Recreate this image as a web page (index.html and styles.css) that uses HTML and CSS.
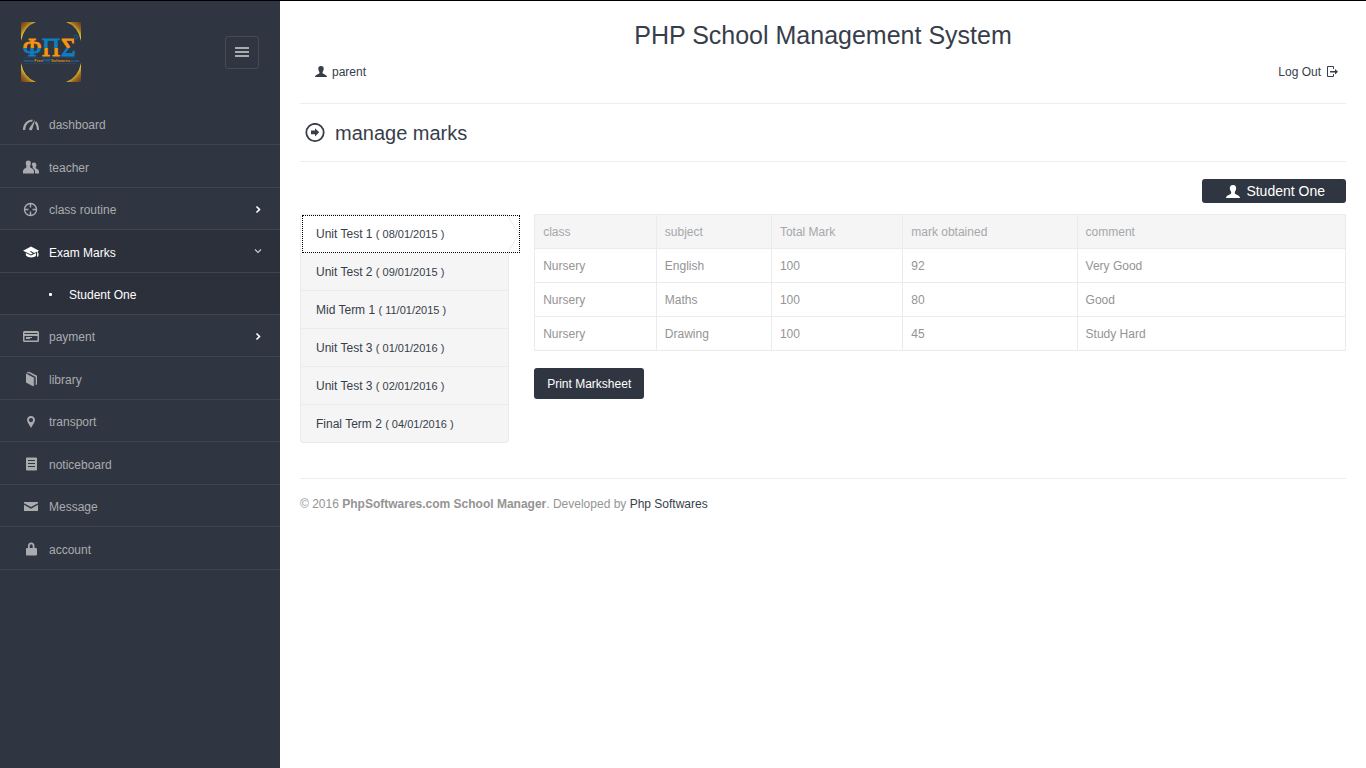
FILE: index.html
```html
<!DOCTYPE html>
<html lang="en">
<head>
<meta charset="utf-8">
<title>manage marks</title>
<link rel="stylesheet" href="styles.css">
</head>
<body>
<div class="page">
  <aside class="sidebar">
    <header class="brand">
      <a href="#" class="logo" aria-label="Home">
        <svg width="60" height="60" viewBox="0 0 60 60">
          <defs>
            <linearGradient id="warm" x1="0" y1="0" x2="0" y2="1"><stop offset=".52" stop-color="#fb9210"/><stop offset=".52" stop-color="#0d7dc4"/></linearGradient>
            <linearGradient id="cool" x1="0" y1="0" x2="0" y2="1"><stop offset=".52" stop-color="#0d7dc4"/><stop offset=".52" stop-color="#fb9210"/></linearGradient>
            <radialGradient id="gold" gradientUnits="userSpaceOnUse" cx="30" cy="30" r="42"><stop offset=".78" stop-color="#e6c62c"/><stop offset=".87" stop-color="#9c6c22"/><stop offset="1" stop-color="#70351c"/></radialGradient>
          </defs>
          <path fill="url(#gold)" d="M0 0h15Q3 4 0 19zM60 0H45Q57 4 60 19zM0 60h15Q3 56 0 41zM60 60H45Q57 56 60 41z"/>
          <g class="logo-letters">
            <text x="2" y="34" fill="url(#warm)" stroke="url(#warm)">Φ</text>
            <text x="21" y="34" fill="url(#cool)" stroke="url(#cool)">Π</text>
            <text x="40" y="34" fill="url(#warm)" stroke="url(#warm)">Σ</text>
          </g>
          <circle cx="55" cy="15" r="2" fill="none" stroke="#1a5988"/>
          <path d="M3 35.500h52M3 41.500h52" stroke="#27435c"/>
          <text class="logo-url" x="3" y="40" fill="#176da9">www.<tspan fill="#df861c">Free</tspan>PHP<tspan fill="#df861c">Softwares</tspan>.com</text>
        </svg>
      </a>
      <button class="toggle" type="button" aria-label="Toggle menu">
        <svg width="14" height="10" viewBox="0 0 14 10"><path d="M0 1h14M0 5h14M0 9h14" stroke="currentColor" stroke-width="2"/></svg>
      </button>
    </header>
    <nav>
      <ul class="menu">
        <li><a href="#"><svg class="ico" viewBox="0 0 16 16"><path d="M1 13C1 7 5 3.500 9.500 3.500" fill="none" stroke="currentColor" stroke-width="2.200"/><path d="M12.500 5Q15 8 15 13" fill="none" stroke="currentColor" stroke-width="2"/><path d="M12.200 2.500L9.200 12.500Q8 14 6.400 12.900Q5.700 12 6.400 11z" fill="currentColor"/></svg><span>dashboard</span></a></li>
        <li><a href="#"><svg class="ico" viewBox="0 0 16 16"><path fill="currentColor" d="M5.300 1.500c1.800 0 2.600 1.100 2.500 2.900 0 1.800-.8 2.200-.8 3.400 0 1.500 4 1.500 4 4.700v2H0v-2c0-3 3.500-3 3.500-4.700C3.500 6.600 2.800 6 2.800 4.400c-.1-1.800.7-2.900 2.500-2.900zM11 3.500c1.500 0 2.400.9 2.400 2.400 0 1.400-.7 1.700-.7 2.700 0 1.500 3.300 1.500 3.300 4v1.900h-4v-2c0-2.100-1.300-2.900-2.500-3.500.8-1 .1-1.700-.7-3.400.1-1.400.8-2.100 2.200-2.100z"/></svg><span>teacher</span></a></li>
        <li><a href="#"><svg class="ico" viewBox="0 0 16 16"><g fill="none" stroke="currentColor" stroke-width="1.400"><circle cx="7.500" cy="7.500" r="6"/><path d="M7.500 2v3.500M7.500 9.500V13M2 7.500h3.500M9.500 7.500H13"/></g></svg><span>class routine</span><svg class="arrow" viewBox="0 0 10 10"><path d="M3.500 1.500L6.500 4.500l-3 3" fill="none" stroke="currentColor" stroke-width="1.600"/></svg></a></li>
        <li class="open"><a href="#"><svg class="ico" viewBox="0 0 16 16"><path fill="currentColor" d="M8 2.500l8 4.200-1.100.6v1.200c1 .8.800 3.700-.2 4.500-.8-.7-.8-2.700-.5-4.200V7.700L11 9l-3-2-1 .5 2.700 2L8 10.500 0 6.700zM2.700 9L8 11.500 13 9v2.800C11 14 5 14 3 11.500z"/></svg><span>Exam Marks</span><svg class="arrow down" viewBox="0 0 10 10"><path d="M2 2.500l3 3 3-3" fill="none" stroke="currentColor" stroke-width="1.200"/></svg></a>
          <ul class="submenu"><li><a href="#"><i class="dot"></i><span>Student One</span></a></li></ul>
        </li>
        <li><a href="#"><svg class="ico" viewBox="0 0 16 16"><path fill="currentColor" fill-rule="evenodd" d="M1.500 2h13Q16 2 16 3.500v8q0 1.500-1.500 1.500h-13Q0 13 0 11.500v-8Q0 2 1.500 2zM1.500 4v1h13V4zM1.500 7v4.500h13V7zM3 8h6v1H3zM3 9h4v1H3z"/></svg><span>payment</span><svg class="arrow" viewBox="0 0 10 10"><path d="M3.500 1.500L6.500 4.500l-3 3" fill="none" stroke="currentColor" stroke-width="1.600"/></svg></a></li>
        <li><a href="#"><svg class="ico" viewBox="0 0 16 16"><path fill="currentColor" d="M3 2.500l7.500 4V15.500l-7.500-4zM3.500 1.700L6 .8l8 4V13.500l-1.300.5V6L5.500 2l-.8.4zM11.200 6.200v8.300l-.5.300V6z"/></svg><span>library</span></a></li>
        <li><a href="#"><svg class="ico" viewBox="0 0 16 16"><path fill="currentColor" fill-rule="evenodd" d="M8 2c2.500 0 4 1.700 4 4 0 2.500-2.500 4.500-4 8-1.500-3.500-4-5.500-4-8 0-2.300 1.500-4 4-4zm0 2a2 2 0 100 4.200A2 2 0 008 4z"/></svg><span>transport</span></a></li>
        <li><a href="#"><svg class="ico" viewBox="0 0 16 16"><path fill="currentColor" fill-rule="evenodd" d="M4 1.500h9q1 0 1 1v11q0 1-1 1H4q-1 0-1-1v-11q0-1 1-1zM5 4v1h7V4zM5 7v1h7V7zM5 10v1h7v-1z"/></svg><span>noticeboard</span></a></li>
        <li><a href="#"><svg class="ico" viewBox="0 0 16 16"><path fill="currentColor" d="M1 3h14v1.300L8 8.100 1 4.300zM1 5.800l7 3.900 7-3.900V12H1z"/></svg><span>Message</span></a></li>
        <li><a href="#"><svg class="ico" viewBox="0 0 16 16"><path fill="currentColor" fill-rule="evenodd" d="M5 7V5q0-3.500 3.200-3.500T11.500 5v2H13q1 0 1 1v5.500q0 1-1 1H4q-1 0-1-1V8q0-1 1-1zm1.700 0h3V5q0-1.800-1.500-1.800T6.700 5z"/></svg><span>account</span></a></li>
      </ul>
    </nav>
  </aside>

  <main class="content">
    <h2 class="site-title">PHP School Management System</h2>
    <div class="userbar">
      <a href="#"><svg class="mini" viewBox="0 0 12 12"><path fill="currentColor" d="M6 0c2 0 2.900 1.200 2.700 3.200C8.500 5 7.500 5.400 7.500 6.700 7.500 8.300 12 8.300 12 11H0c0-2.700 4.500-2.700 4.500-4.300 0-1.300-1-1.700-1.200-3.500C3.100 1.200 4 0 6 0z"/></svg><span>parent</span></a>
      <a href="#"><span>Log Out</span><svg class="mini" viewBox="0 0 12 12"><path d="M7.500 3V.500h-6v10h6V8" fill="none" stroke="currentColor"/><path fill="currentColor" d="M4 5h5V3l3 2.700L9 8.500V6.500H4z"/></svg></a>
    </div>
    <h3 class="page-title"><svg width="20" height="20" viewBox="0 0 20 20"><circle cx="10" cy="9.500" r="8.700" fill="none" stroke="currentColor" stroke-width="1.800"/><path fill="currentColor" d="M6 7.500h4V5.200l4.200 4.100L10 13.500v-2.300H6z"/></svg>manage marks</h3>
    <div class="student-row">
      <button type="button" class="student"><svg width="14" height="13" viewBox="0 0 12 11"><path fill="currentColor" d="M6 0c2 0 2.900 1.200 2.700 3.200C8.500 5 7.500 5.400 7.500 6.700 7.500 8.300 12 8.300 12 11H0c0-2.700 4.500-2.700 4.500-4.300 0-1.300-1-1.700-1.200-3.500C3.100 1.200 4 0 6 0z"/></svg>Student One</button>
    </div>
    <div class="marks">
      <ul class="tabs">
        <li class="active"><a href="#">Unit Test 1 <small>( 08/01/2015 )</small><svg class="point" width="13" height="38" viewBox="0 0 13 38"><path d="M0 0l12 19L0 38" fill="#fff" stroke="#ebebeb"/></svg></a></li>
        <li><a href="#">Unit Test 2 <small>( 09/01/2015 )</small></a></li>
        <li><a href="#">Mid Term 1 <small>( 11/01/2015 )</small></a></li>
        <li><a href="#">Unit Test 3 <small>( 01/01/2016 )</small></a></li>
        <li><a href="#">Unit Test 3 <small>( 02/01/2016 )</small></a></li>
        <li><a href="#">Final Term 2 <small>( 04/01/2016 )</small></a></li>
      </ul>
      <section class="results">
        <table>
          <colgroup><col class="c-class"><col class="c-subject"><col class="c-total"><col class="c-mark"><col></colgroup>
          <thead><tr><th>class</th><th>subject</th><th>Total Mark</th><th>mark obtained</th><th>comment</th></tr></thead>
          <tbody>
            <tr><td>Nursery</td><td>English</td><td>100</td><td>92</td><td>Very Good</td></tr>
            <tr><td>Nursery</td><td>Maths</td><td>100</td><td>80</td><td>Good</td></tr>
            <tr><td>Nursery</td><td>Drawing</td><td>100</td><td>45</td><td>Study Hard</td></tr>
          </tbody>
        </table>
        <button type="button" class="print">Print Marksheet</button>
      </section>
    </div>
    <footer class="footer">© 2016 <strong>PhpSoftwares.com School Manager</strong>. Developed by <a href="#">Php Softwares</a></footer>
  </main>
</div>
</body>
</html>
```
FILE: styles.css
```css
* { box-sizing: border-box; }

body {
  margin: 0;
  border-top: 1px solid #000;
  background: #fff;
  color: #949494;
  font: 12px/17px "Liberation Sans", Arial, sans-serif;
}

ul { list-style: none; margin: 0; padding: 0; }
a { color: #373e4a; text-decoration: none; }
button { font: inherit; cursor: pointer; }
svg { display: block; flex: none; }

.page {
  display: flex;
  min-height: calc(100vh - 1px);
}

/* Sidebar */
.sidebar {
  flex: none;
  width: 280px;
  background: #303641;
}

.brand {
  display: flex;
  justify-content: space-between;
  align-items: center;
  padding: 21px;
}

.logo-letters { font: 25px "Liberation Serif", serif; }
.logo-url { font: bold 4px "Liberation Sans", sans-serif; }

.toggle {
  display: flex;
  align-items: center;
  justify-content: center;
  width: 34px;
  height: 33px;
  padding: 0;
  border: 1px solid #454a54;
  border-radius: 3px;
  background: none;
  color: #aaabae;
}

.menu a {
  display: flex;
  align-items: center;
  gap: 10px;
  min-height: 42px;
  padding: 2px 17px 0 23px;
  border-bottom: 1px solid #3f444f;
  color: #aaabae;
}

.menu span,
.userbar span { padding-top: 2px; }

.menu > li:nth-child(even) > a { min-height: 43px; }
.menu .open a { background: #2c303b; color: #fff; }
.menu .submenu a { gap: 17px; padding-left: 49px; }

.ico { width: 16px; height: 16px; }
.arrow { width: 10px; height: 10px; margin-left: auto; color: #fff; }
.arrow.down { color: #c8c9cc; }

.dot {
  width: 3px;
  height: 3px;
  border-radius: 1px;
  background: #fff;
}

/* Content */
.content {
  flex: 1;
  min-width: 0;
  padding: 20px;
}

.site-title,
.page-title {
  margin: 0;
  color: #373e4a;
  font-weight: normal;
}

.site-title {
  font-size: 25px;
  line-height: 28px;
  text-align: center;
}

.userbar {
  display: flex;
  justify-content: space-between;
  padding: 13px 8px 22px 15px;
  border-bottom: 1px solid #eee;
}

.userbar a { display: flex; align-items: center; gap: 5px; }
.mini { width: 12px; height: 12px; }

.page-title {
  display: flex;
  align-items: center;
  gap: 10px;
  padding: 17px 5px 16px;
  border-bottom: 1px solid #eee;
  font-size: 20px;
  line-height: 24px;
}

.student-row {
  display: flex;
  justify-content: flex-end;
  padding: 17px 0 11px;
}

.student {
  display: flex;
  align-items: center;
  gap: 6px;
  height: 24px;
  padding: 0 21px 0 24px;
  border: 0;
  border-radius: 3px;
  background: #303641;
  color: #fff;
  font-size: 14px;
}

.marks {
  display: flex;
  align-items: flex-start;
  gap: 25px;
  padding-bottom: 35px;
  border-bottom: 1px solid #eee;
}

.tabs {
  flex: none;
  width: 20%;
  border: 1px solid #ebebeb;
  border-radius: 3px;
  background: #f5f5f5;
}

.tabs a { display: block; padding: 11px 15px 9px; }
.tabs li + li:not(:last-child) { border-bottom: 1px solid #ebebeb; }
.tabs small { font-size: 11px; }

.tabs .active a {
  position: relative;
  padding-bottom: 10px;
  background: #fff;
}

.tabs .active a::after {
  content: "";
  position: absolute;
  inset: 0 -12px 0 1px;
  border: 1px dotted #000;
}

.point {
  position: absolute;
  top: 0;
  right: -12px;
}

.results { flex: 1; min-width: 0; }

table {
  width: 100%;
  border-collapse: collapse;
  table-layout: fixed;
}

.c-class { width: 15%; }
.c-subject { width: 14.2%; }
.c-total { width: 16.2%; }
.c-mark { width: 21.5%; }

th,
td {
  padding: 9px 8px 7px;
  border: 1px solid #ebebeb;
  text-align: left;
  font-weight: normal;
}

th { background: #f5f5f5; color: #a6a7aa; }

.print {
  margin-top: 17px;
  padding: 8px 13px 6px;
  border: 0;
  border-radius: 3px;
  background: #303641;
  color: #fff;
}

.footer { padding-top: 17px; }
```
